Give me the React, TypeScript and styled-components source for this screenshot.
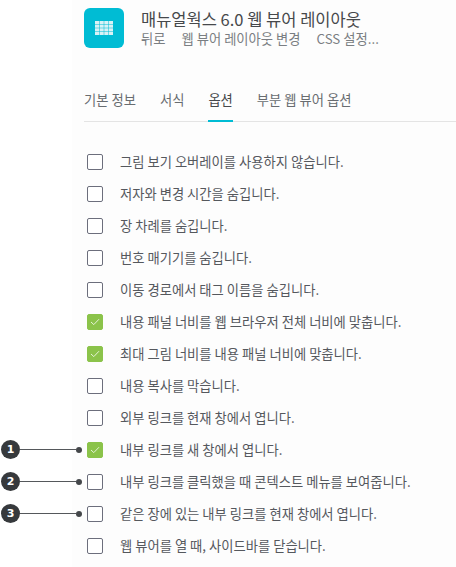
import React from "react";
import styled, { createGlobalStyle } from "styled-components";

const GlobalStyle = createGlobalStyle`
  html, body {
    margin: 0;
    padding: 0;
    background: #ffffff;
  }
  body {
    font-family: "Noto Sans CJK KR", "Noto Sans", sans-serif;
    color: #3c4043;
  }
`;

const Page = styled.div`
  position: relative;
  width: 456px;
  height: 567px;
  overflow: hidden;
  padding-left: 72px;
  box-sizing: border-box;
`;

const Panel = styled.div`
  height: 100%;
  background: #fdfdfd;
  padding-left: 12px;
`;

const Header = styled.div`
  display: flex;
  gap: 17px;
  padding-top: 8px;
  height: 72px;
`;

const AppTile = styled.div`
  width: 40px;
  height: 40px;
  border-radius: 6px;
  background: #00bcd4;
  display: flex;
  align-items: center;
  justify-content: center;
`;

const HeaderText = styled.div`
  display: flex;
  flex-direction: column;
`;

const Title = styled.div`
  font-size: 16.5px;
  line-height: 20px;
  margin-top: 1px;
  color: #46484b;
  white-space: nowrap;
`;

const Links = styled.div`
  display: flex;
  gap: 16px;
  font-size: 13.3px;
  line-height: 18px;
  margin-top: 1px;
  color: #7a7e82;
  white-space: nowrap;
`;

const Tabs = styled.div`
  display: flex;
  gap: 24px;
  height: 41px;
  border-bottom: 1px solid #e4e4e4;
  box-sizing: content-box;
`;

const Tab = styled.div<{ $active?: boolean }>`
  font-size: 13.3px;
  line-height: 40px;
  height: 40px;
  color: ${(p) => (p.$active ? "#46484b" : "#686c70")};
  border-bottom: 2px solid ${(p) => (p.$active ? "#00bcd4" : "transparent")};
`;

const OptionList = styled.div`
  display: flex;
  flex-direction: column;
  padding-top: 24px;
  padding-left: 3px;
`;

const Option = styled.div`
  display: flex;
  align-items: center;
  gap: 17px;
  height: 32px;
  font-size: 13.3px;
  color: #55585d;
  white-space: nowrap;
`;

const OptionLabel = styled.span`
  line-height: 16px;
  margin-top: -1px;
`;

const Checkbox = styled.div<{ $checked?: boolean }>`
  width: 16px;
  height: 16px;
  box-sizing: border-box;
  border-radius: 2px;
  border: 1px solid ${(p) => (p.$checked ? "#8bc34a" : "#6c6e7c")};
  background: ${(p) => (p.$checked ? "#8bc34a" : "#ffffff")};
  display: flex;
  align-items: center;
  justify-content: center;
`;

const Callout = styled.div<{ $top: number }>`
  position: absolute;
  left: 1px;
  top: ${(p) => p.$top}px;
  display: flex;
  align-items: center;
`;

const Badge = styled.div`
  width: 19px;
  height: 19px;
  border-radius: 50%;
  background: #36393c;
  color: #ffffff;
  font-family: "DejaVu Sans", sans-serif;
  font-size: 11px;
  font-weight: 700;
  display: flex;
  align-items: center;
  justify-content: center;
`;

const Leader = styled.div`
  width: 56px;
  height: 1px;
  background: #55585b;
`;

const Dot = styled.div`
  width: 6px;
  height: 6px;
  border-radius: 50%;
  background: #44474a;
`;

const options = [
  { label: "그림 보기 오버레이를 사용하지 않습니다.", checked: false },
  { label: "저자와 변경 시간을 숨깁니다.", checked: false },
  { label: "장 차례를 숨깁니다.", checked: false },
  { label: "번호 매기기를 숨깁니다.", checked: false },
  { label: "이동 경로에서 태그 이름을 숨깁니다.", checked: false },
  { label: "내용 패널 너비를 웹 브라우저 전체 너비에 맞춥니다.", checked: true },
  { label: "최대 그림 너비를 내용 패널 너비에 맞춥니다.", checked: true },
  { label: "내용 복사를 막습니다.", checked: false },
  { label: "외부 링크를 현재 창에서 엽니다.", checked: false },
  { label: "내부 링크를 새 창에서 엽니다.", checked: true },
  { label: "내부 링크를 클릭했을 때 콘텍스트 메뉴를 보여줍니다.", checked: false },
  { label: "같은 장에 있는 내부 링크를 현재 창에서 엽니다.", checked: false },
  { label: "웹 뷰어를 열 때, 사이드바를 닫습니다.", checked: false },
];

const callouts = [
  { n: 1, top: 440 },
  { n: 2, top: 472 },
  { n: 3, top: 504 },
];

const GridIcon = () => (
  <svg width="18" height="14" viewBox="0 0 18 14" fill="none">
    <rect x="0" y="0" width="18" height="14" fill="#d8f2f6" />
    <path
      d="M0 3.5H18M0 7H18M0 10.5H18M4.5 0V14M9 0V14M13.5 0V14"
      stroke="#00bcd4"
      strokeWidth="1"
      opacity="0.5"
    />
  </svg>
);

const CheckIcon = () => (
  <svg width="10" height="8" viewBox="0 0 10 8" fill="none">
    <path d="M1 4L3.8 6.6L9 1.2" stroke="#e6f3d8" strokeWidth="1" />
  </svg>
);

export default function App() {
  return (
    <>
      <GlobalStyle />
      <Page>
        <Panel>
          <Header>
            <AppTile>
              <GridIcon />
            </AppTile>
            <HeaderText>
              <Title>매뉴얼웍스 6.0 웹 뷰어 레이아웃</Title>
              <Links>
                <span>뒤로</span>
                <span>웹 뷰어 레이아웃 변경</span>
                <span>CSS 설정...</span>
              </Links>
            </HeaderText>
          </Header>
          <Tabs>
            <Tab>기본 정보</Tab>
            <Tab>서식</Tab>
            <Tab $active>옵션</Tab>
            <Tab>부분 웹 뷰어 옵션</Tab>
          </Tabs>
          <OptionList>
            {options.map((o) => (
              <Option key={o.label}>
                <Checkbox $checked={o.checked}>{o.checked && <CheckIcon />}</Checkbox>
                <OptionLabel>{o.label}</OptionLabel>
              </Option>
            ))}
          </OptionList>
        </Panel>
        {callouts.map((c) => (
          <Callout key={c.n} $top={c.top}>
            <Badge>{c.n}</Badge>
            <Leader />
            <Dot />
          </Callout>
        ))}
      </Page>
    </>
  );
}
